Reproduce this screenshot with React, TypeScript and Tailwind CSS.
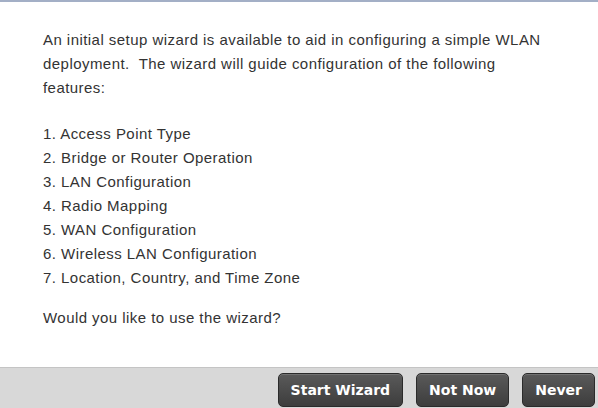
export default function App() {
  const steps = [
    "Access Point Type",
    "Bridge or Router Operation",
    "LAN Configuration",
    "Radio Mapping",
    "WAN Configuration",
    "Wireless LAN Configuration",
    "Location, Country, and Time Zone",
  ];

  return (
    <div className="w-[598px] h-[408px] flex flex-col bg-white border-t-2 border-[#a3afc6] overflow-hidden">
      <div className="flex-1 pl-[43px] pr-[40px] pt-[26px] text-[15px] leading-[24px] tracking-[0.45px] text-[#333] font-['Liberation_Sans',Arial,sans-serif]">
        <p>
          An initial setup wizard is available to aid in configuring a simple WLAN deployment.&nbsp; The wizard will
          guide configuration of the following features:
        </p>
        <ol className="mt-[22px]">
          {steps.map((s, i) => (
            <li key={s}>
              {i + 1}. {s}
            </li>
          ))}
        </ol>
        <p className="mt-[16px]">Would you like to use the wizard?</p>
      </div>
      <div className="h-[41px] shrink-0 border-t border-[#c4c4c4] bg-[#d8d8d8] flex justify-end gap-[13px] pr-[3px] pt-[5px]">
        {["Start Wizard", "Not Now", "Never"].map((label) => (
          <button
            key={label}
            className="h-[34px] px-[12px] rounded-[5px] border border-[#2b2b2b] bg-gradient-to-b from-[#5a5a5a] to-[#3d3d3d] text-white text-[14px] font-bold font-['DejaVu_Sans',Verdana,sans-serif] shadow-[inset_0_1px_0_rgba(255,255,255,0.15)]"
          >
            {label}
          </button>
        ))}
      </div>
    </div>
  );
}
